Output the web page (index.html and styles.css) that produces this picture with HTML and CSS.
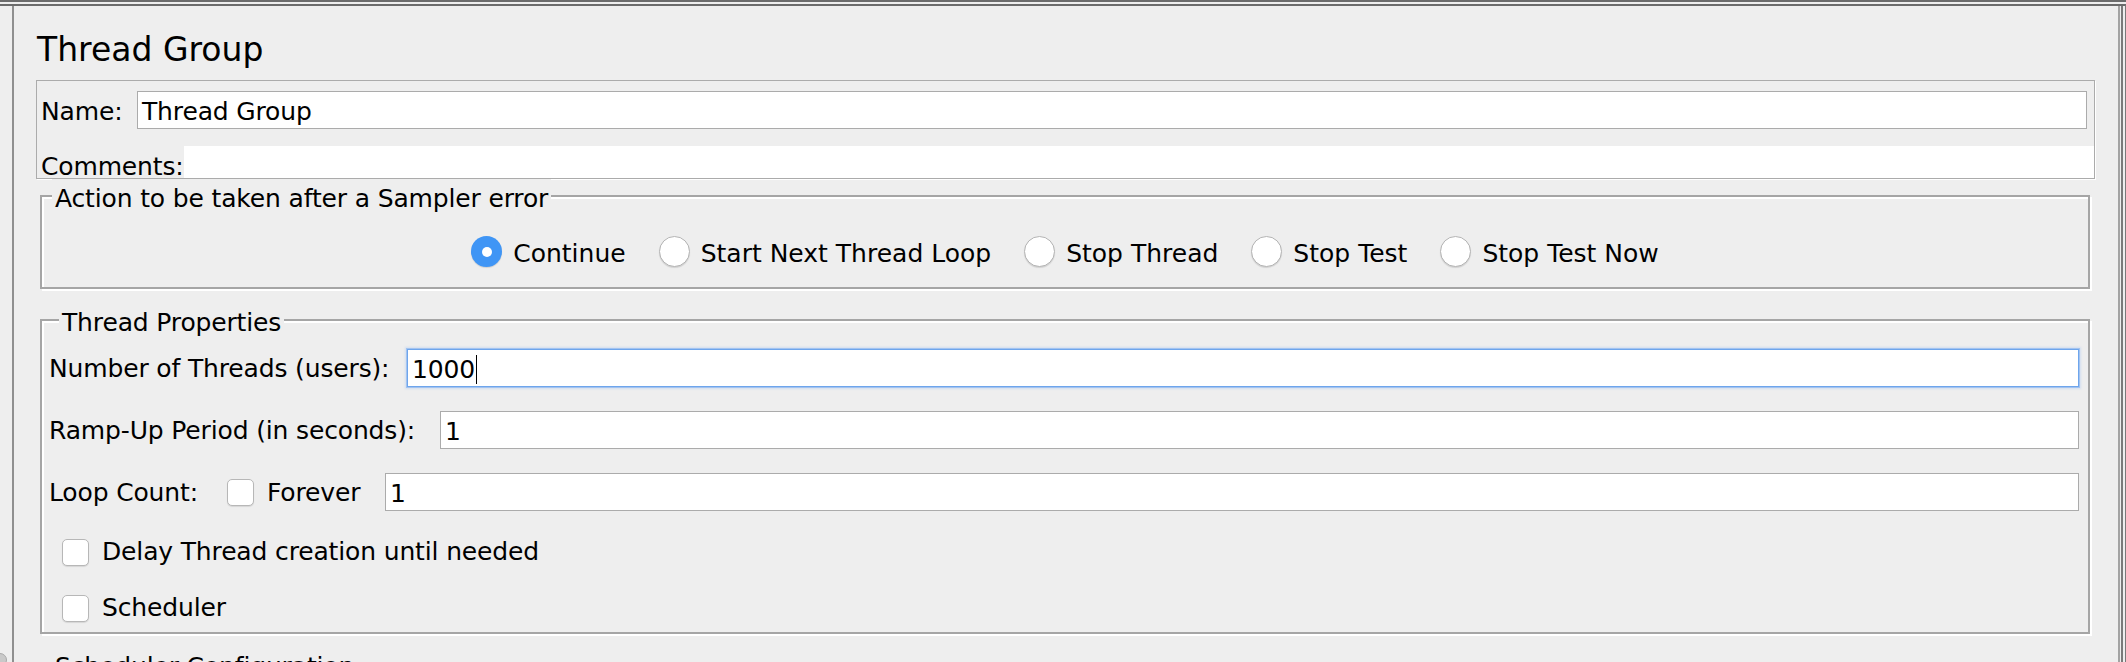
FILE: index.html
```html
<!DOCTYPE html>
<html>
<head>
<meta charset="utf-8">
<title>Thread Group</title>
<link rel="stylesheet" href="styles.css">
</head>
<body>
<div class="frame">
  <div class="frame-inner">
    <div class="panel">
      <div class="title">Thread Group</div>

      <div class="namebox">
        <div class="name-row">
          <div class="lbl name-lbl">Name:</div>
          <div class="field">Thread Group</div>
        </div>
        <div class="comments-row">
          <div class="lbl comments-lbl">Comments:</div>
          <div class="textarea"></div>
        </div>
      </div>

      <fieldset class="group action">
        <legend>Action to be taken after a Sampler error</legend>
        <div class="radios">
          <div class="radio-item"><span class="radio checked"></span><span class="opt">Continue</span></div>
          <div class="radio-item"><span class="radio"></span><span class="opt">Start Next Thread Loop</span></div>
          <div class="radio-item"><span class="radio"></span><span class="opt">Stop Thread</span></div>
          <div class="radio-item"><span class="radio"></span><span class="opt">Stop Test</span></div>
          <div class="radio-item"><span class="radio"></span><span class="opt">Stop Test Now</span></div>
        </div>
      </fieldset>

      <fieldset class="group props">
        <legend>Thread Properties</legend>
        <div class="prop-row">
          <div class="lbl w-threads">Number of Threads (users):</div>
          <div class="field focused">1000<span class="caret"></span></div>
        </div>
        <div class="prop-row">
          <div class="lbl w-ramp">Ramp-Up Period (in seconds):</div>
          <div class="field">1</div>
        </div>
        <div class="prop-row">
          <div class="lbl w-loop">Loop Count:</div>
          <span class="checkbox"></span>
          <div class="lbl w-forever">Forever</div>
          <div class="field">1</div>
        </div>
        <div class="check-row delay">
          <span class="checkbox"></span>
          <span class="opt">Delay Thread creation until needed</span>
        </div>
        <div class="check-row sched">
          <span class="checkbox"></span>
          <span class="opt">Scheduler</span>
        </div>
      </fieldset>

      <fieldset class="group sched-conf">
        <legend>Scheduler Configuration</legend>
        <div class="sched-body"></div>
      </fieldset>
    </div>
  </div>
  <div class="knob"></div>
</div>
</body>
</html>
```

FILE: styles.css
```css
html, body {
  margin: 0;
  padding: 0;
}

body {
  width: 2126px;
  height: 662px;
  overflow: hidden;
  background: #eeeeee;
  color: #000;
  font-family: "DejaVu Sans", "Liberation Sans", sans-serif;
  font-size: 25px;
  letter-spacing: -0.15px;
}

.frame {
  position: relative;
  height: 662px;
  box-sizing: border-box;
  border-top: 2px solid #6b6b6b;
}

.frame-inner {
  margin-top: 2px;
  height: 656px;
  border-top: 2px solid #6b6b6b;
  border-right: 1px solid #7a7a7a;
  display: flex;
}

.panel {
  margin-left: 12px;
  width: 2108px;
  box-sizing: border-box;
  border-left: 2px solid #8f8f8f;
  border-right: 2px solid #a3a3a3;
  box-shadow: 1px 0 0 #eeeeee, 3px 0 0 #7a7a7a;
  padding-left: 22px;
  overflow: hidden;
}

.title {
  margin: 24px 0 0 1px;
  height: 40px;
  line-height: 40px;
  font-size: 33px;
  letter-spacing: 0;
}

/* name / comments box */
.namebox {
  margin: 10px 23px 0 0;
  height: 99px;
  box-sizing: border-box;
  border: 1px solid #ababab;
  box-shadow: 1px 1px 0 #ffffff;
  padding-top: 10px;
}

.lbl {
  flex: none;
  line-height: 29px;
  white-space: nowrap;
}

.name-row {
  display: flex;
  align-items: baseline;
  padding-left: 4px;
  margin-right: 7px;
}

.name-lbl { width: 96px; }

.field {
  flex: 1;
  height: 38px;
  box-sizing: border-box;
  border: 1px solid #ababab;
  background: #ffffff;
  padding: 5px 4px 0;
  line-height: 29px;
  white-space: nowrap;
}

.field.focused {
  border-color: #6ea5ec;
  box-shadow: 0 0 0 1px rgba(120, 172, 240, 0.55), 0 0 2px 2px rgba(150, 190, 245, 0.3);
}

.caret {
  display: inline-block;
  width: 1px;
  height: 29px;
  background: #000;
  vertical-align: -6px;
  margin-left: 1px;
}

.comments-row {
  display: flex;
  align-items: flex-end;
  height: 32px;
  margin-top: 17px;
  padding-left: 4px;
}

.comments-lbl {
  width: 143px;
  line-height: 22px;
}

.textarea {
  flex: 1;
  height: 32px;
  background: #ffffff;
}

/* titled groups */
.group {
  margin: 0 28px 0 4px;
  padding: 0;
  min-width: 0;
  border: 2px solid #a5a5a5;
  box-shadow: inset 2px 2px 0 #ffffff, 2px 2px 0 #ffffff;
}

.group legend {
  margin-left: 10px;
  padding: 5px 3px 0;
  line-height: 29px;
  background: #eeeeee;
  white-space: nowrap;
}

.action {
  padding: 23px 0 20px;
}

.radios {
  display: flex;
  justify-content: center;
  align-items: center;
  gap: 33px;
  height: 31px;
  letter-spacing: 0;
}

.radio-item {
  display: flex;
  align-items: center;
  gap: 11px;
}

.radio {
  flex: none;
  width: 31px;
  height: 31px;
  box-sizing: border-box;
  border-radius: 50%;
  border: 1px solid #b4b4b4;
  background: #ffffff;
  box-shadow: 0 1px 1px rgba(0, 0, 0, 0.12);
}

.radio.checked {
  border: none;
  background: #3f95f5;
  display: flex;
  align-items: center;
  justify-content: center;
}

.radio.checked::after {
  content: "";
  width: 10px;
  height: 10px;
  border-radius: 50%;
  background: #ffffff;
}

.opt {
  line-height: 27px;
  padding-top: 4px;
  white-space: nowrap;
}

.props {
  margin-top: 14px;
  padding: 12px 9px 10px 7px;
}

.prop-row {
  display: flex;
  align-items: center;
  height: 38px;
}

.prop-row + .prop-row {
  margin-top: 24px;
}

.w-threads { width: 358px; }
.w-ramp { width: 391px; }
.w-loop { width: 178px; }
.w-forever { width: 118px; margin-left: 13px; }

.checkbox {
  flex: none;
  width: 27px;
  height: 27px;
  box-sizing: border-box;
  border: 1px solid #b7b7b7;
  border-radius: 5px;
  background: #ffffff;
  box-shadow: 0 1px 1px rgba(0, 0, 0, 0.1);
}

.check-row {
  display: flex;
  align-items: center;
  gap: 13px;
  height: 28px;
  margin-left: 13px;
}

.check-row .opt {
  line-height: 28px;
  padding-top: 0;
}

.check-row.delay { margin-top: 27px; }
.check-row.sched { margin-top: 28px; }

.sched-conf {
  margin-top: 13px;
}

.sched-body {
  height: 60px;
}

.knob {
  position: absolute;
  left: -7px;
  top: 651px;
  width: 12px;
  height: 12px;
  border-radius: 50%;
  background: #c9c9c9;
  border: 1px solid #a9a9a9;
}
```
